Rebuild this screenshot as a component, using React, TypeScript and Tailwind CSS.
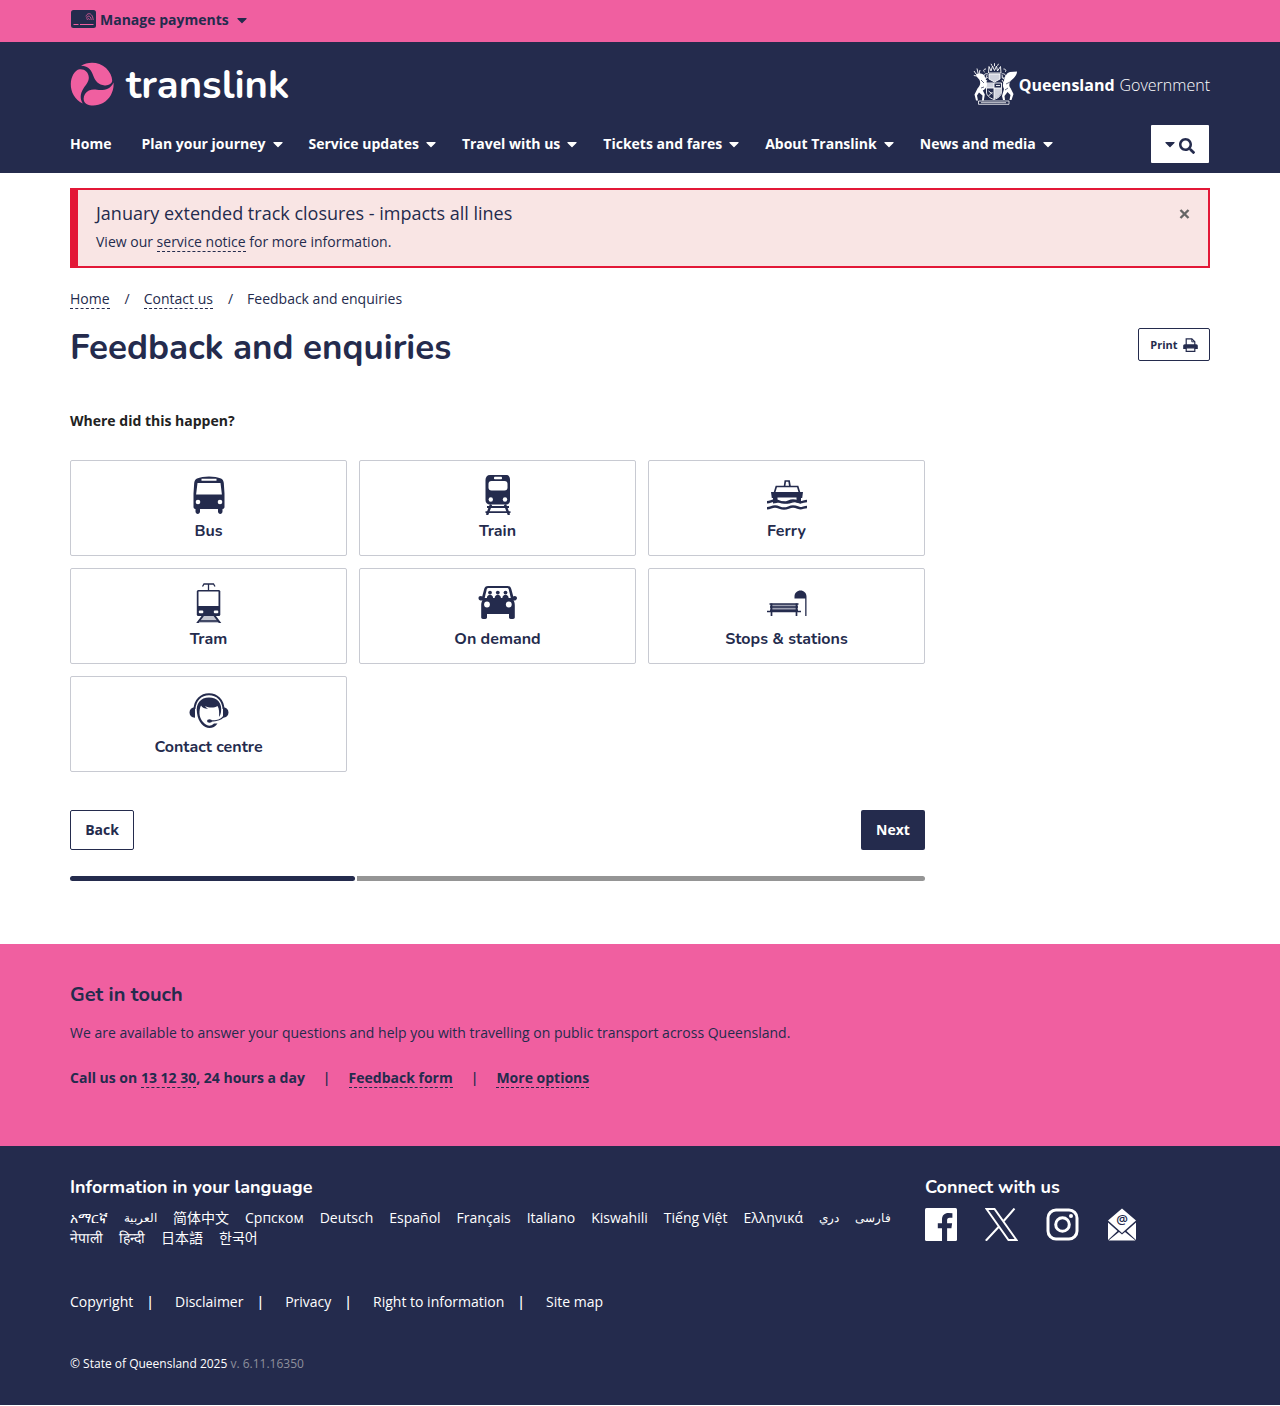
import type { ReactNode } from "react";
import { FaCaretDown, FaSearch } from "react-icons/fa";

const NAVY = "#242b4d";

function Container({ children }: { children: ReactNode }) {
  return <div className="mx-auto w-full max-w-[1170px] px-[15px]">{children}</div>;
}

function CardIcon() {
  return (
    <svg width="25" height="18" viewBox="0 0 25 18" aria-hidden="true">
      <rect width="25" height="18" rx="2.5" fill={NAVY} />
      <path d="M2.500 14.500h5M9 14.500h13.500" stroke="#f05fa0" strokeWidth="1" />
      <g fill="none" stroke="#f05fa0" strokeWidth="0.8">
        <path d="M15 6.500C16 2.500 21.500 2 22.200 10" />
        <path d="M15.500 8.500c.8-3.500 4.500-3.200 4.700 1.500" />
        <path d="M16.200 10c.4-2 2-2 2.200 0" />
      </g>
    </svg>
  );
}

function TranslinkMark() {
  return (
    <svg width="44" height="44" viewBox="0 0 44 44" aria-hidden="true" fill="#f05fa0">
      <path d="M11 3.700C18-.6 29-.6 36 6c3.800 3.700 6 8 6.200 12.400.1 3.100-3.500 5.300-7.500 5-6-.4-9.600-4.500-11.300-9.400C21.500 8.600 19.300 3.900 11 3.700Z" />
      <path d="M12.800 41.600C4.800 37.600.6 30 .8 22 1 15 4.500 8.200 9.600 7.300c4.500-.7 8.900 2.600 9.200 8 .3 4.500-3.400 8-5.800 12-2.800 4.700-3.200 9.500-.2 14.300Z" />
      <path d="M43.500 20.500c.8 8-3.200 16.500-10.500 20.600-5 2.800-12 3.400-16.500 1-3.400-1.900-3.600-6.500-1.500-10 2.500-4.200 7.200-5 12-4.300 6.500.9 13.700-.4 16.500-7.300Z" />
    </svg>
  );
}

function Crest() {
  return (
    <svg width="44" height="42" viewBox="0 0 44 42" aria-hidden="true" fill="none" stroke="#fff" strokeWidth="0.9">
      <path d="M16 3.500 18 8l1.500-5 2 4.500L23.500 3l1 5 3-4.500L28 10H15.500zM18 .8l1 2M21.500.2v3M25.500.8l-1 2" />
      <path d="M15 11c-3-1-4.500 1-4 3 1 2 3 1 4 0M28.500 11c3-1 4.500 1 4 3-1 2-3 1-4 0M13 6c-2.500 0-3 2-1.500 3M30.500 6c2.500 0 3 2 1.500 3" />
      <path d="M16 11h11v5l-5.500 3L16 16z" fill="#cfd1dc" />
      <path d="M14 12c-1 4-2 5-4 5M29 12c1 4 2 5 4 5M14 17l-3 4M29 17l2 3" />
      <path d="M13.500 20h15v9c0 3.500-3 6-7.500 7.500-4.500-1.500-7.500-4-7.500-7.500z" />
      <path d="M13.500 20H21v5h-7.500zM21 25h7.500v5l-3 4.500L21 36z" fill="#cfd1dc" stroke="none" />
      <path d="M13.500 25h15M21 20v16.500M23 22.500h4M15.500 28l4 3m-4 2 4-4" />
      <path d="M1 8l2 3M4 5.500 5 10M.8 12.500 4 13M7 7l-1 4" />
      <path d="M3 11c3-1.500 6-.5 8 1 1 3 3 5.500 3 10-.5 3-2.500 4.500-4.200 5.500l2 4-1 6H9l.5-5-3.500-3-2 3 1 5H3l-1.500-6 3-6c2.500-3 3.500-5 2-8.500C5.500 15 3.400 14.500 3 11z" fill="#fff" stroke="none" />
      <path d="M44 8.500 37 9c-3.500 1-4.500 4-5.500 7-1.200 4-2.500 6-.5 10l-2 7 1 4h2l-.5-4 3-4 3 3-1 5h2l2-6-3-6c-2-2-1-5 0-7 3-2.500 6.500-5.500 6.500-9.500z" fill="#fff" stroke="none" />
      <path d="m33 21 4-2M32 27l3-2M8 17l3 3M8 25l3-1" stroke={NAVY} strokeWidth="0.7" />
      <path d="M5.500 38h30.500v3.300H5.500zM8 39.700h25" strokeWidth="0.800" />
    </svg>
  );
}

function BusIcon() {
  return (
    <svg width="40" height="40" viewBox="0 0 40 40" aria-hidden="true" fill={NAVY}>
      <path d="M8 3.500C14 .8 26 .8 32 3.500c1.800.9 2.500 2.500 2.800 4.500L35.500 18.500V32c0 1.200-.8 2-2 2v2.500c0 3.300-4.500 3.300-4.500 0V34H11v2.500c0 3.300-4.500 3.300-4.500 0V34c-1.200 0-2-.8-2-2V18.500L5.200 8C5.500 6 6.200 4.400 8 3.500Z" />
      <path d="M12.500 3.700h15v2h-15zM8.500 8h23l1.400 11.500H7.100z" fill="#fff" />
      <circle cx="9" cy="27" r="2.300" fill="#fff" />
      <circle cx="31" cy="27" r="2.300" fill="#fff" />
    </svg>
  );
}

function TrainIcon() {
  return (
    <svg width="40" height="40" viewBox="0 0 40 40" aria-hidden="true">
      <path d="M12 0h16c3 0 4 2 4 5v20c0 2.800-1.200 4.500-4 4.500H12c-2.800 0-4.500-1.700-4.500-4.500V5c0-3 1.500-5 4.500-5Z" fill={NAVY} />
      <rect x="16" y="1.800" width="8" height="2.400" rx=".8" fill="#fff" />
      <rect x="10.500" y="6" width="19" height="9.500" rx="3" fill="#fff" />
      <circle cx="12.800" cy="24.500" r="2.200" fill="#fff" />
      <circle cx="27" cy="24.500" r="2.200" fill="#fff" />
      <path d="m13 29.500-4 10.500M27 29.500 31 40" stroke={NAVY} strokeWidth="2.400" />
      <path d="M9 32h22M7.500 37.200h25" stroke={NAVY} strokeWidth="1.800" />
    </svg>
  );
}

function FerryIcon() {
  return (
    <svg width="40" height="40" viewBox="0 0 40 40" aria-hidden="true">
      <path d="M17.500 11.500 18.300 6h3.800l.9 5.500M7.500 17.500 9.300 11.500h21.400l1.800 6" fill="none" stroke={NAVY} strokeWidth="1.700" />
      <path d="M4 17h32l-.8 6H34v5.500c-2 0-3.500-1.300-6-1.300-3 0-4.500 1.600-7.500 1.600s-5-1.600-7.500-1.600-4.500 1.300-7 1.300V23H4.800z" fill={NAVY} />
      <path d="M10.500 22.500h19V26c-4-.5-5.500 1-9 1s-5.500-1.500-10-1z" fill="#fff" />
      <path d="M0 27.200c4 0 4-1.600 8-1.600s5 1.900 9 1.900 5-1.900 9-1.900 5 1.600 7.500 1.600S37 26 40 26M0 33.200c4 0 4-1.600 8-1.600s5 1.900 9 1.900 5-1.900 9-1.900 5 1.600 7.500 1.600S37 32 40 32" fill="none" stroke={NAVY} strokeWidth="2.500" />
    </svg>
  );
}

function TramIcon() {
  return (
    <svg width="40" height="40" viewBox="0 0 40 40" aria-hidden="true">
      <path d="M13.500 3.500 15 1h9.500L26 3.500M19.500 1v7" fill="none" stroke={NAVY} strokeWidth="1.300" />
      <path d="m14 32-5 8h22l-5-8z" fill="#c3c5d0" />
      <path d="m14.500 32-6.500 8.500M25 32l6.500 8.500" stroke={NAVY} strokeWidth="2" />
      <path d="M11 38h18" stroke={NAVY} strokeWidth="1.600" />
      <rect x="7.800" y="7" width="23.500" height="26" rx="1.500" fill={NAVY} />
      <path d="M9.500 8.500h20V23h-20z" fill="#fff" />
      <rect x="9.800" y="27.500" width="4.500" height="2.800" rx="1" fill="#fff" />
      <rect x="24.800" y="27.500" width="4.500" height="2.800" rx="1" fill="#fff" />
    </svg>
  );
}

function OnDemandIcon() {
  return (
    <svg width="40" height="40" viewBox="0 0 40 40" aria-hidden="true" fill={NAVY}>
      <path d="M10 3h19.500c2.200 0 3.200 1 3.800 3l2 7.500 1.200-.6c2 0 2.500 1 2.500 2.300s-1.500 2.600-3.500 2.300c1 1.300 1.300 3 1.300 5v12c0 2-5.800 2-5.800 0V31H9v3.500c0 2-5.800 2-5.800 0v-12c0-2 .3-3.700 1.300-5-2.500.3-4-.9-4-2.300s.5-2.300 2.500-2.300l1.200.6 2-7.500C6.800 4 7.800 3 10 3Z" />
      <path d="M10.500 5h18.500c1 0 1.500.5 1.800 1.500l2 8.500H6.700l2-8.500c.3-1 .8-1.500 1.800-1.500Z" fill="#fff" />
      <circle cx="12" cy="9.600" r="1.900" />
      <circle cx="19.800" cy="9.600" r="1.900" />
      <circle cx="27.500" cy="9.600" r="1.900" />
      <path d="M8.800 15.500c0-5 6.400-5 6.400 0zM16.600 15.500c0-5 6.400-5 6.400 0zM24.300 15.500c0-5 6.400-5 6.400 0z" />
      <circle cx="9" cy="21.500" r="2.900" fill="#fff" />
      <circle cx="30.800" cy="21.500" r="2.900" fill="#fff" />
    </svg>
  );
}

function StopsIcon() {
  return (
    <svg width="40" height="40" viewBox="0 0 40 40" aria-hidden="true">
      <path d="M27.500 15.500v-2c0-3.500 2.700-6 6-6s6 2.500 6 6v2zM38.200 15h1.300v18h-1.300z" fill={NAVY} />
      <path d="M3 21h28v7H3z" fill="#9ea1b2" />
      <path d="M2.500 21h29M3 24h28M3 27.200h28M0 28.500h34" stroke={NAVY} strokeWidth="1.300" />
      <path d="M4.500 20.500V33M29.500 20.500V33" stroke={NAVY} strokeWidth="1.700" />
    </svg>
  );
}

function ContactIcon() {
  return (
    <svg width="40" height="40" viewBox="0 0 40 40" aria-hidden="true" fill={NAVY}>
      <path d="M5.500 18C6 9 12 3.200 20 3.200S34 9 34.500 18" fill="none" stroke={NAVY} strokeWidth="1.900" />
      <path d="M6 16v10.800C2.500 26.500.5 24.500.5 21.500S2.500 16.500 6 16ZM34 16v10.800c3.500-.3 5.500-2.300 5.500-5.300S37.500 16.500 34 16Z" />
      <path d="M8 22C6.500 12.500 11.500 6.500 20 6.500S33.500 12.500 32 21c-.3 2-1.200 4-2 5 .3-4.500.3-8-1.500-11-3.500 2.200-8.500 2-12.500 0 1 1.500 2 2.300 3 2.800-3 .2-5.500-1-7-3.300-1.200 2-1.500 5-1.500 8 .3 5.500 3.500 8.800 6 10.800 2.500 2 5.500 2 8.500-.8h3.500c-2 3-5 4.500-8 4.500-5.500 0-11.500-6-12.500-15Z" />
      <path d="M34.500 25.500c-2.500 4-7 4.500-13 4.500" fill="none" stroke={NAVY} strokeWidth="1.400" />
      <ellipse cx="20.500" cy="30" rx="2.500" ry="1.700" />
    </svg>
  );
}

function PrintIcon() {
  return (
    <svg width="15" height="14" viewBox="0 0 15 14" aria-hidden="true">
      <path d="M3.200 7V.8h5.600l3 3V7" fill="#fff" stroke={NAVY} strokeWidth="1.200" />
      <path d="M8.800.8v3h3" fill="none" stroke={NAVY} strokeWidth="1" />
      <path d="M1.800 6.200h11.400c1 0 1.600.8 1.600 1.800v3H.2V8c0-1 .6-1.800 1.600-1.800Z" fill={NAVY} />
      <path d="M3.200 9.800h8.600v3.500H3.200z" fill="#fff" stroke={NAVY} strokeWidth="1.200" />
    </svg>
  );
}

const nav = ["Plan your journey", "Service updates", "Travel with us", "Tickets and fares", "About Translink", "News and media"];

const places = [
  { label: "Bus", icon: <BusIcon /> },
  { label: "Train", icon: <TrainIcon /> },
  { label: "Ferry", icon: <FerryIcon /> },
  { label: "Tram", icon: <TramIcon /> },
  { label: "On demand", icon: <OnDemandIcon /> },
  { label: "Stops & stations", icon: <StopsIcon /> },
  { label: "Contact centre", icon: <ContactIcon /> },
];

const languages = [
  "አማርኛ", "العربية", "简体中文", "Српском", "Deutsch", "Español", "Français", "Italiano", "Kiswahili",
  "Tiếng Việt", "Ελληνικά", "دري", "فارسی", "नेपाली", "हिन्दी", "日本語", "한국어",
];
const arabicScript = ["العربية", "دري", "فارسی"];

const legal = ["Copyright", "Disclaimer", "Privacy", "Right to information", "Site map"];

const dashed = "border-b border-dashed border-[#242b4d]";
const heading = "font-['Nunito','Lato',sans-serif]";

export default function App() {
  return (
    <div className="bg-white font-['Open_Sans','Noto_Sans_CJK_SC',sans-serif] text-sm leading-5 text-[#242b4d]">
      <div className="h-[42px] bg-[#f05fa0]">
        <Container>
          <button className="flex h-10 items-center font-bold">
            <span className="mr-1 mb-[2px] ml-px"><CardIcon /></span>
            Manage payments
            <FaCaretDown className="ml-[5px] size-4" />
          </button>
        </Container>
      </div>

      <header className="bg-[#242b4d] text-white">
        <Container>
          <div className="flex items-center justify-between pt-5">
            <a href="#home" className="flex items-center">
              <TranslinkMark />
              <span className="ml-3 pt-[2px] font-['Nunito','Lato',sans-serif] text-[40px] leading-[42px] font-bold">translink</span>
            </a>
            <a href="#qld" className="flex items-center text-base">
              <Crest />
              <span className="ml-0.5 pt-[2px] font-bold">Queensland</span>
              <span className="ml-[5px] pt-[2px] font-light">Government</span>
            </a>
          </div>
          <nav className="mt-[19px] flex items-center justify-between pb-[10px]">
            <div className="flex items-center gap-[23px] font-bold">
              <a href="#home" className="mr-[7px]">Home</a>
              {nav.map((item) => (
                <button key={item} className="flex items-center">
                  {item}
                  <FaCaretDown className="ml-1 size-4" />
                </button>
              ))}
            </div>
            <button aria-label="Search" className="mr-px flex h-[38px] w-[58px] items-center justify-center rounded-[1px] bg-white pr-1 text-[#242b4d]">
              <FaCaretDown className="size-4" />
              <FaSearch className="mt-1 ml-px size-4" />
            </button>
          </nav>
        </Container>
      </header>

      <main className="pb-[63px]">
        <Container>
          <section className="mt-[15px] flex h-20 items-start justify-between border-2 border-l-8 border-[#e31837] bg-[#f9e5e4] pt-[11px] pr-[18px] pl-[18px]">
            <div>
              <h2 className="text-lg leading-[25px]">January extended track closures - impacts all lines</h2>
              <p className="mt-[6px] leading-5">
                View our <a href="#notice" className={dashed}>service notice</a> for more information.
              </p>
            </div>
            <button aria-label="Close" className="mt-[3px] text-[#666]">
              <svg width="11" height="20" viewBox="0 0 11 20" stroke="currentColor" strokeWidth="2.400" aria-hidden="true">
                <path d="m1.500 6 8 8m0-8-8 8" />
              </svg>
            </button>
          </section>

          <nav aria-label="Breadcrumb" className="mt-[21px] flex">
            <span><a href="#home" className={dashed}>Home</a></span>
            <span className="mr-[14px] ml-[15px]">/</span>
            <span><a href="#contact" className={dashed}>Contact us</a></span>
            <span className="mr-[14px] ml-[15px]">/</span>
            <span>Feedback and enquiries</span>
          </nav>

          <div className="mt-[19px] flex items-start justify-between">
            <h1 className={`${heading} text-[35px] leading-10 font-bold`}>Feedback and enquiries</h1>
            <button className="flex h-[33px] w-[72px] items-center justify-center gap-[5px] rounded-xs border border-[#242b4d] text-[11px] font-bold">
              Print <PrintIcon />
            </button>
          </div>

          <div className="w-3/4">
            <p className="mt-[43px] font-bold text-[#222]">Where did this happen?</p>
            <div className="mt-[29px] grid grid-cols-3 gap-3">
              {places.map((p) => (
                <button key={p.label} className={`${heading} flex h-24 flex-col items-center rounded-xs border border-[#c8cad2] pt-[14px] text-base font-bold`}>
                  {p.icon}
                  <span className="mt-1 leading-6">{p.label}</span>
                </button>
              ))}
            </div>
            <div className="mt-[38px] flex justify-between font-bold">
              <button className="h-10 w-16 rounded-xs border border-[#242b4d]">Back</button>
              <button className="h-10 w-16 rounded-xs bg-[#242b4d] text-white">Next</button>
            </div>
            <div className="mt-[26px] flex h-[5px] gap-[2px]">
              <div className="w-1/3 rounded-full bg-[#242b4d]" />
              <div className="flex-1 rounded-r-full bg-[#959595]" />
            </div>
          </div>
        </Container>
      </main>

      <section className="bg-[#f05fa0] pt-[37px] pb-[58px]">
        <Container>
          <h2 className={`${heading} text-xl leading-7 font-bold`}>Get in touch</h2>
          <p className="mt-[13px] leading-[22px]">We are available to answer your questions and help you with travelling on public transport across Queensland.</p>
          <div className="mt-6 flex font-bold">
            <span>Call us on <a href="#call" className={dashed}>13 12 30</a>, 24 hours a day</span>
            <span className="mx-[18px] font-semibold">|</span>
            <span><a href="#feedback" className={dashed}>Feedback form</a></span>
            <span className="mx-[18px] font-semibold">|</span>
            <span><a href="#more" className={dashed}>More options</a></span>
          </div>
        </Container>
      </section>

      <footer className="bg-[#242b4d] pt-7 pb-[31px] text-white">
        <Container>
          <div className="flex">
            <div className="w-3/4 pr-6">
              <h2 className={`${heading} text-lg leading-[26px] font-bold`}>Information in your language</h2>
              <div className="mt-2 flex flex-wrap gap-x-4">
                {languages.map((l) => (
                  <a key={l} href="#language" className={arabicScript.includes(l) ? "h-5 text-xs leading-5" : "h-5"}>{l}</a>
                ))}
              </div>
            </div>
            <div className="w-1/4">
              <h2 className={`${heading} text-lg leading-[26px] font-bold`}>Connect with us</h2>
              <div className="mt-2 flex items-center gap-7">
                <a href="#facebook" aria-label="Facebook">
                  <svg width="32" height="33" viewBox="0 0 32 33">
                    <rect width="32" height="33" rx="1.500" fill="#fff" />
                    <path d="M17 33V20.200h-4.200v-5H17v-3.700C17 7.300 19.600 5 23.400 5l4 .2v4.500h-2.700c-2.100 0-2.600 1-2.600 2.500v3h5l-.7 5h-4.300V33z" fill={NAVY} />
                  </svg>
                </a>
                <a href="#x" aria-label="X">
                  <svg width="33" height="33" viewBox="0 0 33 33" fill="none" stroke="#fff" strokeWidth="2">
                    <path d="M1.500 1h8l22 31h-8zM29.500.5 17.800 14M14 18.500.8 32.800" />
                  </svg>
                </a>
                <a href="#instagram" aria-label="Instagram">
                  <svg width="33" height="33" viewBox="0 0 33 33" fill="none" stroke="#fff" strokeWidth="3">
                    <rect x="2" y="2" width="29" height="29" rx="8" />
                    <circle cx="16.500" cy="16.500" r="6.800" />
                    <circle cx="25" cy="8" r="2" fill="#fff" stroke="none" />
                  </svg>
                </a>
                <a href="#email" aria-label="Email">
                  <svg width="30" height="33" viewBox="0 0 30 33">
                    <path d="M1 12.500 15 .5l14 12L15 25zM1 14.500l9.500 8.500L1 32zM29 14.500 19.500 23l9.500 9zM1.500 32.500 12 24l3 2.600 3-2.600 10.500 8.500z" fill="#fff" />
                    <text x="15" y="16" textAnchor="middle" fontFamily="Open Sans, sans-serif" fontSize="13" fontWeight="600" fill={NAVY}>@</text>
                  </svg>
                </a>
              </div>
            </div>
          </div>
          <div className="mt-11 flex">
            {legal.map((item, i) => (
              <span key={item} className="flex">
                {i > 0 && <span className="mr-[21px] ml-[13px] font-semibold">|</span>}
                <a href="#legal">{item}</a>
              </span>
            ))}
          </div>
          <p className="mt-[42px] text-xs leading-5">© State of Queensland 2025 <span className="text-[#8e909c]">v. 6.11.16350</span></p>
        </Container>
      </footer>
    </div>
  );
}
